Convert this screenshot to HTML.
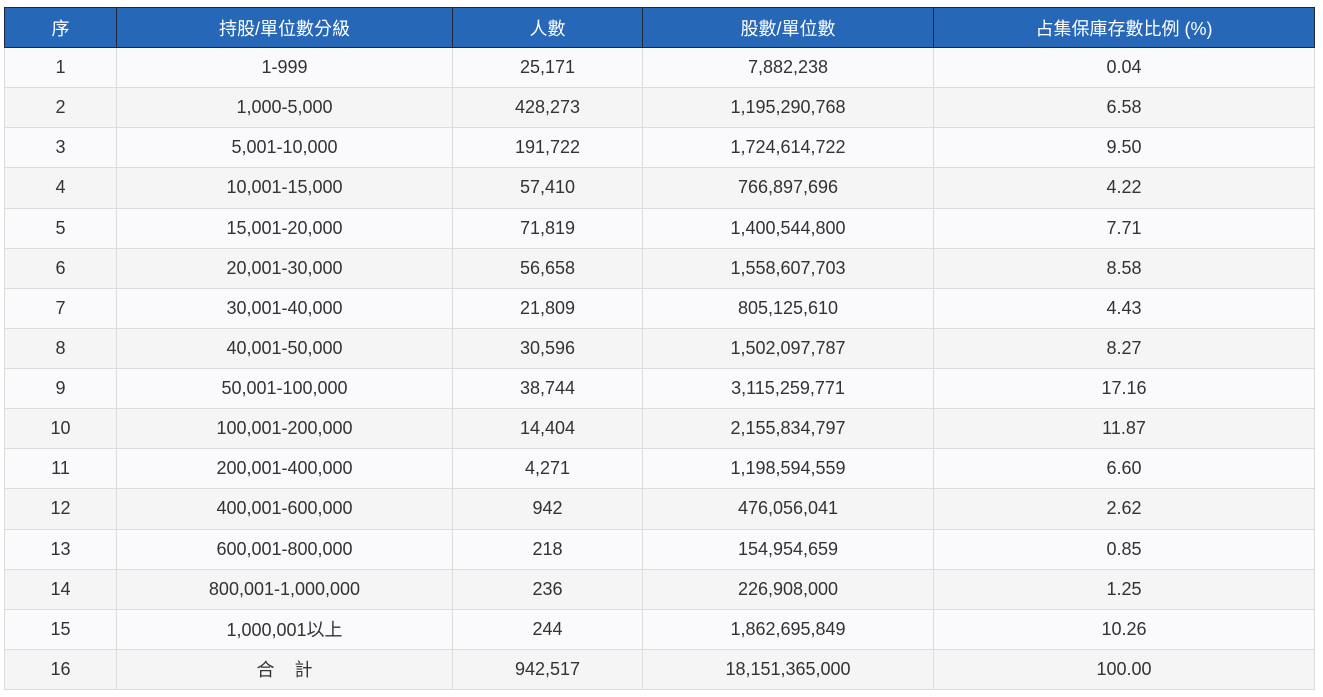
<!DOCTYPE html>
<html><head><meta charset="utf-8"><style>
html,body{margin:0;padding:0;background:#fff;width:1323px;height:697px;overflow:hidden}
table{position:absolute;left:4px;top:7px;border-collapse:collapse;table-layout:fixed;width:1310px;
font-family:"Liberation Sans","Noto Sans CJK TC",sans-serif;font-size:18px;color:#333}
th{background:#2767b8;color:#fff;font-weight:normal;height:39px;border:1px solid #1e2a3a;padding:0;text-align:center}
td{height:39.13px;border:1px solid #dcdcdc;padding:0;text-align:center}
tr:nth-child(odd) td{background:#fafafc}
tr:nth-child(even) td{background:#f5f5f5}
</style></head><body>
<table>
<colgroup><col style="width:112px"><col style="width:336px"><col style="width:190px"><col style="width:291px"><col style="width:381px"></colgroup>
<thead><tr><th>序</th><th>持股/單位數分級</th><th>人數</th><th>股數/單位數</th><th>占集保庫存數比例 (%)</th></tr></thead>
<tbody>
<tr><td>1</td><td>1-999</td><td>25,171</td><td>7,882,238</td><td>0.04</td></tr>
<tr><td>2</td><td>1,000-5,000</td><td>428,273</td><td>1,195,290,768</td><td>6.58</td></tr>
<tr><td>3</td><td>5,001-10,000</td><td>191,722</td><td>1,724,614,722</td><td>9.50</td></tr>
<tr><td>4</td><td>10,001-15,000</td><td>57,410</td><td>766,897,696</td><td>4.22</td></tr>
<tr><td>5</td><td>15,001-20,000</td><td>71,819</td><td>1,400,544,800</td><td>7.71</td></tr>
<tr><td>6</td><td>20,001-30,000</td><td>56,658</td><td>1,558,607,703</td><td>8.58</td></tr>
<tr><td>7</td><td>30,001-40,000</td><td>21,809</td><td>805,125,610</td><td>4.43</td></tr>
<tr><td>8</td><td>40,001-50,000</td><td>30,596</td><td>1,502,097,787</td><td>8.27</td></tr>
<tr><td>9</td><td>50,001-100,000</td><td>38,744</td><td>3,115,259,771</td><td>17.16</td></tr>
<tr><td>10</td><td>100,001-200,000</td><td>14,404</td><td>2,155,834,797</td><td>11.87</td></tr>
<tr><td>11</td><td>200,001-400,000</td><td>4,271</td><td>1,198,594,559</td><td>6.60</td></tr>
<tr><td>12</td><td>400,001-600,000</td><td>942</td><td>476,056,041</td><td>2.62</td></tr>
<tr><td>13</td><td>600,001-800,000</td><td>218</td><td>154,954,659</td><td>0.85</td></tr>
<tr><td>14</td><td>800,001-1,000,000</td><td>236</td><td>226,908,000</td><td>1.25</td></tr>
<tr><td>15</td><td>1,000,001以上</td><td>244</td><td>1,862,695,849</td><td>10.26</td></tr>
<tr><td>16</td><td>合&nbsp;&nbsp;&nbsp;&nbsp;計</td><td>942,517</td><td>18,151,365,000</td><td>100.00</td></tr>
</tbody></table>
</body></html>
